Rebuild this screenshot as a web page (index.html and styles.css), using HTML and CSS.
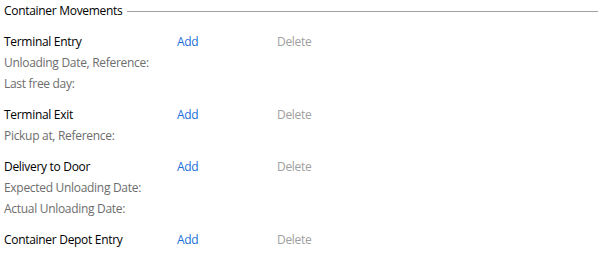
FILE: index.html
```html
<!DOCTYPE html>
<html>
<head>
<meta charset="utf-8">
<link rel="stylesheet" href="styles.css">
</head>
<body>
<div class="panel">
  <div class="legend"><span class="legend-text">Container Movements</span><span class="legend-line"></span></div>
  <div class="group">
    <div class="row"><span class="title">Terminal Entry</span><a class="add">Add</a><span class="del">Delete</span></div>
    <div class="sub">Unloading Date, Reference:</div>
    <div class="sub">Last free day:</div>
  </div>
  <div class="group">
    <div class="row"><span class="title">Terminal Exit</span><a class="add">Add</a><span class="del">Delete</span></div>
    <div class="sub">Pickup at, Reference:</div>
  </div>
  <div class="group">
    <div class="row"><span class="title">Delivery to Door</span><a class="add">Add</a><span class="del">Delete</span></div>
    <div class="sub">Expected Unloading Date:</div>
    <div class="sub">Actual Unloading Date:</div>
  </div>
  <div class="group">
    <div class="row"><span class="title">Container Depot Entry</span><a class="add">Add</a><span class="del">Delete</span></div>
  </div>
</div>
</body>
</html>
```
FILE: styles.css
```css
html, body {
  margin: 0;
  padding: 0;
  background: #ffffff;
}
body {
  font-family: "Open Sans", "Noto Sans", sans-serif;
  font-size: 12px;
  letter-spacing: -0.3px;
  color: #000;
}
.panel {
  padding: 0 4px 0 4px;
}
.legend {
  display: flex;
  align-items: center;
  height: 21px;
  line-height: 21px;
}
.legend-text {
  flex: none;
}
.legend-line {
  flex: 1;
  height: 1px;
  background: #a0a0a0;
  margin-left: 5px;
  margin-top: 1px;
}
.group {
  margin-top: 10px;
}
.row {
  display: flex;
  height: 21px;
  line-height: 21px;
}
.title {
  width: 173px;
  flex: none;
}
.add {
  width: 100px;
  flex: none;
  color: #1a6fd8;
}
.del {
  color: #a0a0a0;
}
.sub {
  height: 21px;
  line-height: 21px;
  color: #6d6d6d;
}
```
